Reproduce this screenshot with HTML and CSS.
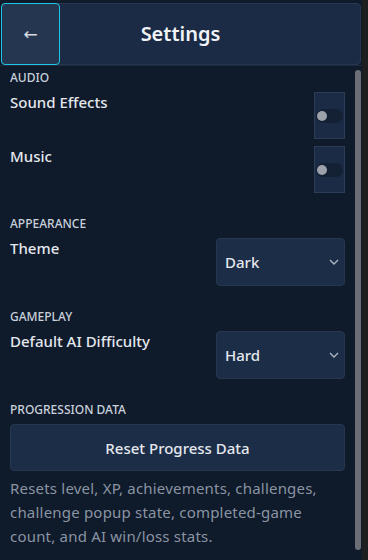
FILE: index.html
```html
<!DOCTYPE html>
<html lang="en">
<head>
    <meta charset="UTF-8">
    <meta name="viewport" content="width=device-width, initial-scale=1.0">
    <title>Settings</title>
    <link rel="stylesheet" href="styles.css">
</head>
<body>

    <div class="app">
        <div class="header">
            <button class="back">&larr;</button>
            <h1>Settings</h1>
            <div class="spacer"></div>
        </div>

        <div class="main">
            <div class="scroll">
                <div class="section">
                    <div class="section-title">AUDIO</div>
                    <div class="row">
                        <span class="label">Sound Effects</span>
                        <span class="toggle-box"><span class="toggle"><span class="knob"></span></span></span>
                    </div>
                    <div class="row">
                        <span class="label">Music</span>
                        <span class="toggle-box"><span class="toggle"><span class="knob"></span></span></span>
                    </div>
                </div>

                <div class="section">
                    <div class="section-title">APPEARANCE</div>
                    <div class="row">
                        <span class="label">Theme</span>
                        <div class="select">
                            <span>Dark</span>
                            <svg width="10" height="6" viewBox="0 0 10 6"><path d="M1 1 L5 5 L9 1" fill="none" stroke="#aeb6c2" stroke-width="1.4"/></svg>
                        </div>
                    </div>
                </div>

                <div class="section">
                    <div class="section-title">GAMEPLAY</div>
                    <div class="row">
                        <span class="label">Default AI Difficulty</span>
                        <div class="select">
                            <span>Hard</span>
                            <svg width="10" height="6" viewBox="0 0 10 6"><path d="M1 1 L5 5 L9 1" fill="none" stroke="#aeb6c2" stroke-width="1.4"/></svg>
                        </div>
                    </div>
                </div>

                <div class="section">
                    <div class="section-title">PROGRESSION DATA</div>
                    <button class="reset">Reset Progress Data</button>
                    <p class="desc">Resets level, XP, achievements, challenges, challenge popup state, completed-game count, and AI win/loss stats.</p>
                </div>
            </div>

            <!-- scrollbar drawn by hand, headless browser hides the real one -->
            <div class="scrollbar"><div class="thumb"></div></div>
        </div>
    </div>

</body>
</html>
```

FILE: styles.css
```css
html, body {
    margin: 0;
    padding: 0;
    height: 100%;
}

body {
    font-family: "Noto Sans", "Open Sans", sans-serif;
    background-color: #1d1e20;
    color: #e4e8ee;
    overflow: hidden;
}

.app {
    width: 362px;
    height: 560px;
    display: flex;
    flex-direction: column;
    background: #0f1a2a;
}

.header {
    display: flex;
    align-items: stretch;
    height: 62px;
    margin: 3px 1px 0 1px;
    background: #1b2b45;
    border: 1px solid #26374f;
    border-radius: 4px;
    box-sizing: border-box;
    flex-shrink: 0;
}

.back {
    width: 59px;
    margin: -1px 0 -1px -1px;
    background: #243650;
    border: 1px solid #1fc6e3;
    border-radius: 4px;
    color: #d6dbe2;
    font-family: "DejaVu Sans", sans-serif;
    font-size: 17px;
    padding: 0;
    cursor: pointer;
}

.header h1 {
    flex: 1;
    margin: 0;
    text-align: center;
    font-size: 20px;
    font-weight: 600;
    line-height: 60px;
    color: #f1f4f8;
}

.spacer {
    width: 59px;
}

.main {
    flex: 1;
    min-height: 0;
    display: flex;
    border-top: 1px solid #1c2a3e;
}

.scroll {
    flex: 1;
    overflow: hidden;
    padding: 4px 8px 0 10px;
}

.scrollbar {
    width: 9px;
    padding: 4px 1px 10px 2px;
    box-sizing: border-box;
}

.thumb {
    height: 100%;
    background: #6b6f75;
    border-radius: 3px;
}

.section {
    display: flex;
    flex-direction: column;
    margin-bottom: 23px;
}

.section-title {
    font-size: 12px;
    font-weight: 500;
    line-height: 16px;
    color: #c9d1dc;
    margin-bottom: 6px;
}

.row {
    display: flex;
    justify-content: space-between;
    align-items: flex-start;
    margin-bottom: 7px;
}

.row:last-child {
    margin-bottom: 0;
}

.label {
    font-size: 15px;
    font-weight: 500;
    line-height: 20px;
    color: #e4e8ee;
}

.toggle-box {
    width: 31px;
    height: 47px;
    box-sizing: border-box;
    background: #1b2b45;
    border: 1px solid #2b3c56;
    display: flex;
    align-items: center;
    justify-content: center;
}

.toggle {
    width: 27px;
    height: 14px;
    border-radius: 7px;
    background: #142033;
    display: flex;
    align-items: center;
    padding-left: 1px;
    box-sizing: border-box;
}

.knob {
    width: 10px;
    height: 10px;
    border-radius: 50%;
    background: #9ca1aa;
}

.select {
    width: 129px;
    height: 48px;
    box-sizing: border-box;
    background: #1c2d47;
    border: 1px solid #26374f;
    border-radius: 4px;
    display: flex;
    align-items: center;
    justify-content: space-between;
    padding: 0 5px 0 8px;
    font-size: 15px;
    font-weight: 500;
    color: #e4e8ee;
}

.reset {
    height: 47px;
    background: #1c2d47;
    border: 1px solid #26374f;
    border-radius: 4px;
    color: #e4e8ee;
    font-family: inherit;
    font-size: 15px;
    font-weight: 500;
    cursor: pointer;
}

.desc {
    margin: 5px 0 0;
    font-size: 15px;
    line-height: 24px;
    letter-spacing: 0.2px;
    color: #8a94a3;
}
```
